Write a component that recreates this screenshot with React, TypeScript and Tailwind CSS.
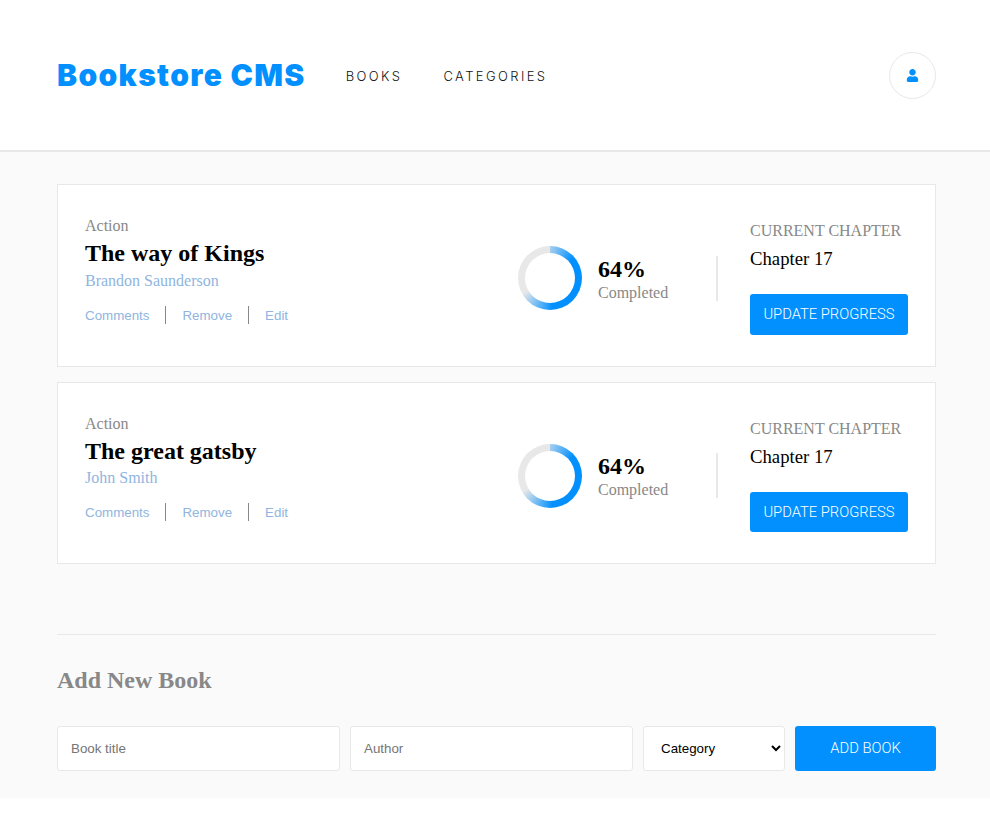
import { FaUser } from 'react-icons/fa';

const books = [
  { id: 1, category: 'Action', title: 'The way of Kings', author: 'Brandon Saunderson' },
  { id: 2, category: 'Action', title: 'The great gatsby', author: 'John Smith' },
];

const BookCard = ({ category, title, author }: { category: string; title: string; author: string }) => (
  <div className="mb-[15px] flex h-[182.5px] border border-[#e8e8e8] bg-white px-[27px] pt-[31px] font-['Liberation_Serif',serif]">
    <div className="w-[433px]">
      <p className="text-[16px] leading-[20px] text-[#888888]">{category}</p>
      <h2 className="text-[24px] font-bold leading-[34px] text-black">{title}</h2>
      <p className="-mt-[0.5px] text-[16px] leading-[22px] text-[#8fb5e0]">{author}</p>
      <div className="mt-[14px] flex items-center font-['Liberation_Sans',sans-serif] text-[13.33px] text-[#8fb5e0]">
        <span className="border-r border-[#888888] pr-4 pt-px leading-[17px]">Comments</span>
        <span className="border-r border-[#888888] px-4 pt-px leading-[17px]">Remove</span>
        <span className="pl-4 pt-px leading-[17px]">Edit</span>
      </div>
    </div>
    <div className="mt-[30px] flex h-[64px] w-[200px] items-center">
      <div className="flex h-[64px] w-[64px] items-center justify-center rounded-full bg-[conic-gradient(#e8e8e8_-20deg,#0290ff_50deg,#0290ff_175deg,#e8e8e8_240deg)]">
        <div className="h-[50px] w-[50px] rounded-full bg-white" />
      </div>
      <div className="ml-4">
        <p className="text-[24px] font-bold leading-[28px] text-black">64%</p>
        <p className="text-[16px] leading-[19px] text-[#888888]">Completed</p>
      </div>
      <div className="ml-auto h-[45px] w-[2px] bg-[#e8e8e8]" />
    </div>
    <div className="ml-[32px] w-[158px]">
      <p className="mt-[4px] text-[16px] leading-[22px] text-[#888888]">CURRENT CHAPTER</p>
      <p className="mt-[6px] text-[18.72px] leading-[22px] text-black">Chapter 17</p>
      <button className="mt-[24px] h-[40.5px] w-[158px] rounded-[3px] bg-[#0290ff] font-['Roboto',sans-serif] text-[14.75px] font-light text-white">
        UPDATE PROGRESS
      </button>
    </div>
  </div>
);

const App = () => (
  <div className="h-[818px] bg-white">
    <header className="flex h-[152px] items-center border-b-2 border-[#e8e8e8] bg-white pl-[57px] pr-[54px]">
      <h1 className="font-['Inter',sans-serif] text-[30px] font-black tracking-[1.35px] text-[#0290ff]">Bookstore CMS</h1>
      <nav className="ml-10 mt-[3px] flex gap-[41px] font-['Inter',sans-serif] text-[13px] font-light tracking-[2.4px] text-[#121212]">
        <span>BOOKS</span>
        <span>CATEGORIES</span>
      </nav>
      <div className="ml-auto flex h-[47px] w-[47px] items-center justify-center rounded-full border border-[#e8e8e8]">
        <FaUser className="h-[13px] w-[13px] text-[#0290ff]" />
      </div>
    </header>
    <main className="h-[646px] bg-[#fafafa] pl-[57px] pr-[54px] pt-[32px]">
      {books.map((b) => (
        <BookCard key={b.id} category={b.category} title={b.title} author={b.author} />
      ))}
      <div className="mt-[70px] border-t border-[#e8e8e8] pt-[30px]">
        <h3 className="font-['Liberation_Serif',serif] text-[24px] font-bold leading-[30px] text-[#888888]">Add New Book</h3>
        <form className="mt-[31px] flex gap-[10px] font-['Liberation_Sans',sans-serif] text-[13.33px]">
          <input placeholder="Book title" className="h-[45px] w-[283px] rounded-[3px] border border-[#e8e8e8] bg-white px-[13px] placeholder:text-[#757575]" />
          <input placeholder="Author" className="h-[45px] w-[283px] rounded-[3px] border border-[#e8e8e8] bg-white px-[13px] placeholder:text-[#757575]" />
          <select className="h-[45px] w-[142px] rounded-[3px] border border-[#e8e8e8] bg-white px-[13px] text-black">
            <option>Category</option>
          </select>
          <button type="button" className="h-[45px] w-[141px] rounded-[3px] bg-[#0290ff] font-['Roboto',sans-serif] text-[14.75px] font-light text-white">ADD BOOK</button>
        </form>
      </div>
    </main>
  </div>
);

export default App;
